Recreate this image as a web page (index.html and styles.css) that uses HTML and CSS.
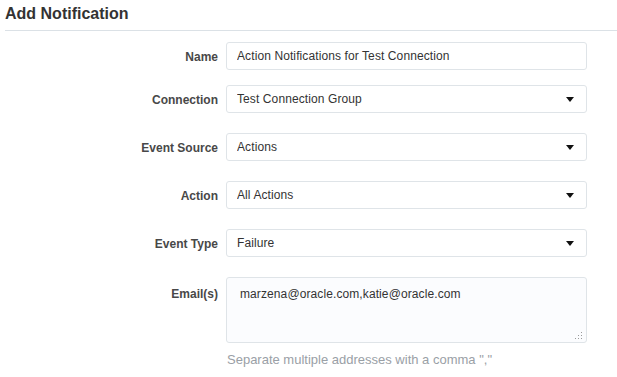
FILE: index.html
```html
<!DOCTYPE html>
<html lang="en">
<head>
  <meta charset="UTF-8">
  <meta name="viewport" content="width=device-width, initial-scale=1.0">
  <title>Add Notification</title>
  <link rel="stylesheet" href="styles.css">
</head>
<body>
  <div class="panel">
    <h1 class="panel-title">Add Notification</h1>
    <form class="notif-form">
      <div class="form-row row-name">
        <label class="form-label" for="name">Name</label>
        <input class="form-input" id="name" type="text" value="Action Notifications for Test Connection">
      </div>
      <div class="form-row">
        <label class="form-label" for="connection">Connection</label>
        <div class="select-wrap">
          <select class="form-select" id="connection">
            <option>Test Connection Group</option>
          </select>
          <svg class="select-arrow" width="8" height="5" viewBox="0 0 8 5"><path d="M0 0h8L4 5z" fill="#111"/></svg>
        </div>
      </div>
      <div class="form-row">
        <label class="form-label" for="source">Event Source</label>
        <div class="select-wrap">
          <select class="form-select" id="source">
            <option>Actions</option>
          </select>
          <svg class="select-arrow" width="8" height="5" viewBox="0 0 8 5"><path d="M0 0h8L4 5z" fill="#111"/></svg>
        </div>
      </div>
      <div class="form-row">
        <label class="form-label" for="action">Action</label>
        <div class="select-wrap">
          <select class="form-select" id="action">
            <option>All Actions</option>
          </select>
          <svg class="select-arrow" width="8" height="5" viewBox="0 0 8 5"><path d="M0 0h8L4 5z" fill="#111"/></svg>
        </div>
      </div>
      <div class="form-row">
        <label class="form-label" for="type">Event Type</label>
        <div class="select-wrap">
          <select class="form-select" id="type">
            <option>Failure</option>
          </select>
          <svg class="select-arrow" width="8" height="5" viewBox="0 0 8 5"><path d="M0 0h8L4 5z" fill="#111"/></svg>
        </div>
      </div>
      <div class="form-row row-email">
        <label class="form-label" for="emails">Email(s)</label>
        <div class="area-wrap">
          <textarea class="form-area" id="emails">marzena@oracle.com,katie@oracle.com</textarea>
          <svg class="grip" width="9" height="9" viewBox="0 0 9 9">
            <g fill="#9a9a9a">
              <rect x="7" y="1" width="1" height="1"/>
              <rect x="4" y="4" width="1" height="1"/>
              <rect x="7" y="4" width="1" height="1"/>
              <rect x="1" y="7" width="1" height="1"/>
              <rect x="4" y="7" width="1" height="1"/>
              <rect x="7" y="7" width="1" height="1"/>
            </g>
          </svg>
        </div>
      </div>
      <div class="form-row">
        <span></span>
        <p class="form-hint">Separate multiple addresses with a comma ","</p>
      </div>
    </form>
  </div>
</body>
</html>
```

FILE: styles.css
```css
* {
  margin: 0;
  padding: 0;
  box-sizing: border-box;
}
body {
  font-family: "Liberation Sans", Arial, sans-serif;
  background: #fff;
  color: #333;
  font-size: 12px;
}
.panel {
  padding: 5px 0 0 5px;
}
.panel-title {
  font-size: 16px;
  font-weight: bold;
  color: #333;
  line-height: 18px;
  height: 26px;
  border-bottom: 1px solid #dbe1e6;
}
.notif-form {
  display: flex;
  flex-direction: column;
  padding-top: 11px;
}
.form-row {
  display: grid;
  grid-template-columns: 213px 361px;
  column-gap: 8px;
  align-items: center;
  margin-bottom: 20px;
}
.row-name {
  margin-bottom: 15px;
}
.row-email {
  align-items: start;
  margin-bottom: 9px;
}
.form-label {
  text-align: right;
  font-weight: bold;
  color: #484848;
  font-size: 12px;
  padding-top: 2px;
}
.row-email .form-label {
  padding-top: 10px;
}
.form-input,
.form-select {
  display: block;
  width: 100%;
  height: 28px;
  border: 1px solid #dfe4e8;
  border-radius: 3px;
  background: #fff;
  font-family: inherit;
  font-size: 12px;
  letter-spacing: 0.1px;
  color: #333;
  padding: 0 10px;
  outline: none;
}
.form-select {
  appearance: none;
  -webkit-appearance: none;
}
.select-wrap,
.area-wrap {
  position: relative;
}
.select-arrow {
  position: absolute;
  right: 13px;
  top: 12px;
  pointer-events: none;
}
.form-area {
  display: block;
  width: 100%;
  height: 66px;
  border: 1px solid #dfe4e8;
  border-radius: 3px;
  background: #fbfcfe;
  font-family: inherit;
  font-size: 12px;
  letter-spacing: 0.1px;
  color: #333;
  padding: 9px 13px;
  resize: none;
  outline: none;
}
.grip {
  position: absolute;
  right: 4px;
  bottom: 3px;
}
.form-hint {
  color: #9aa0a6;
  font-size: 13px;
  padding-left: 1px;
}
```
